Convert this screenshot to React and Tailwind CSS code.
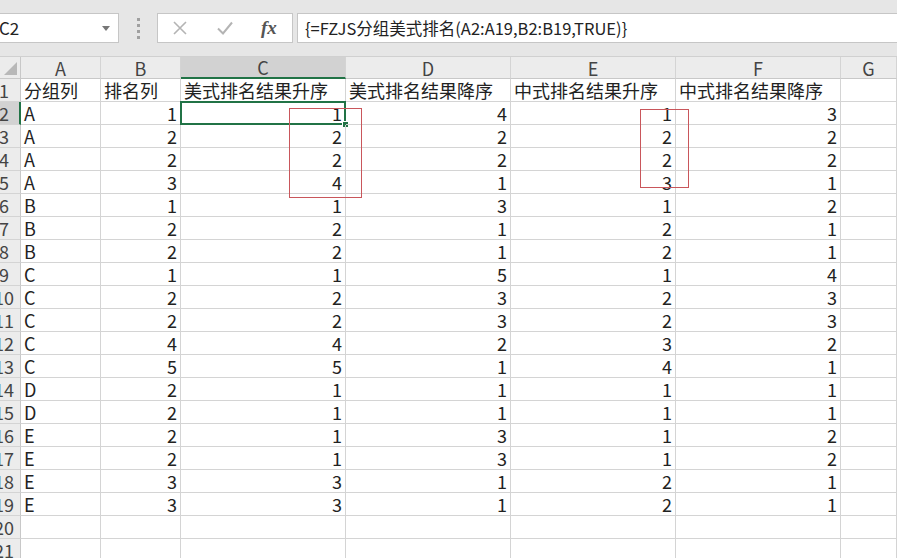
import { useState } from 'react';

const headers = ['分组列', '排名列', '美式排名结果升序', '美式排名结果降序', '中式排名结果升序', '中式排名结果降序'];

const rows = [
  ['A', 1, 1, 4, 1, 3],
  ['A', 2, 2, 2, 2, 2],
  ['A', 2, 2, 2, 2, 2],
  ['A', 3, 4, 1, 3, 1],
  ['B', 1, 1, 3, 1, 2],
  ['B', 2, 2, 1, 2, 1],
  ['B', 2, 2, 1, 2, 1],
  ['C', 1, 1, 5, 1, 4],
  ['C', 2, 2, 3, 2, 3],
  ['C', 2, 2, 3, 2, 3],
  ['C', 4, 4, 2, 3, 2],
  ['C', 5, 5, 1, 4, 1],
  ['D', 2, 1, 1, 1, 1],
  ['D', 2, 1, 1, 1, 1],
  ['E', 2, 1, 3, 1, 2],
  ['E', 2, 1, 3, 1, 2],
  ['E', 3, 3, 1, 2, 1],
  ['E', 3, 3, 1, 2, 1],
];

const cols = ['A', 'B', 'C', 'D', 'E', 'F', 'G'];
const gridCols = 'grid grid-cols-[21px_80px_80px_165px_165px_165px_165px_1fr]';

// Numero de fila, recortado por la izquierda como en la captura
function RowHead({ n, selected }) {
  return (
    <div
      className={
        'h-[23px] overflow-hidden flex items-center border-b border-[#d4d4d4] ' +
        (selected ? 'bg-[#d2d2d2] border-r-2 border-r-[#217346]' : 'bg-[#ececec] border-r border-r-[#c8c8c8]')
      }
    >
      <div className="w-[30px] shrink-0 ml-[-11px] text-center leading-none text-[#444]">{n}</div>
    </div>
  );
}

function Cell({ children, left, selected }) {
  return (
    <div
      className={
        'relative h-[23px] flex items-center border-r border-b border-[#d4d4d4] px-[3px] leading-none whitespace-nowrap text-[#222] ' +
        (left ? 'justify-start' : 'justify-end')
      }
    >
      {children}
      {selected && (
        <div className="absolute left-[-1px] top-[-1px] right-[-1px] bottom-[-1px] border-2 border-[#217346]">
          <div className="absolute right-[-5px] bottom-[-5px] w-[7px] h-[7px] bg-[#217346] border border-white" />
        </div>
      )}
    </div>
  );
}

export default function App() {
  const [formula] = useState('{=FZJS分组美式排名(A2:A19,B2:B19,TRUE)}');

  return (
    <div
      className="w-[897px] h-[558px] overflow-hidden bg-white"
      style={{ fontFamily: '"Noto Sans CJK SC", "Liberation Sans", sans-serif' }}
    >
      {/* Barra de formulas */}
      <div className="h-[57px] bg-[#e6e6e6] border-b border-[#d0d0d0] flex items-start pt-[13px]">
        <div className="w-[119px] h-[30px] bg-white border border-l-0 border-[#c6c6c6] flex items-center justify-between pr-[8px]">
          <span className="text-[17px] text-[#222] ml-[-1px]">C2</span>
          <svg width="8" height="5" viewBox="0 0 8 5"><path d="M0 0h8L4 5z" fill="#777" /></svg>
        </div>
        <div className="w-[38px] h-[30px] flex flex-col items-center justify-center gap-[3px]">
          <span className="w-[3px] h-[3px] bg-[#a0a0a0]" />
          <span className="w-[3px] h-[3px] bg-[#a0a0a0]" />
          <span className="w-[3px] h-[3px] bg-[#a0a0a0]" />
          <span className="w-[3px] h-[3px] bg-[#a0a0a0]" />
        </div>
        <div className="w-[136px] h-[30px] bg-white border border-[#c6c6c6] flex items-center">
          <svg className="ml-[14px]" width="16" height="16" viewBox="0 0 16 16">
            <path d="M2 2L14 14M14 2L2 14" stroke="#b4b4b4" strokeWidth="1.6" />
          </svg>
          <svg className="ml-[28px]" width="18" height="16" viewBox="0 0 18 16">
            <path d="M2 8.5L7 13.5L16 2.5" stroke="#b4b4b4" strokeWidth="2" fill="none" />
          </svg>
          <span
            className="ml-[27px] text-[19px] italic font-bold text-[#555]"
            style={{ fontFamily: '"Liberation Serif", serif' }}
          >
            fx
          </span>
        </div>
        <div className="ml-[4px] flex-1 h-[30px] bg-white border border-r-0 border-[#c6c6c6] flex items-center pl-[7px]">
          <span className="text-[16.5px] text-[#222] whitespace-nowrap">{formula}</span>
        </div>
      </div>

      {/* Hoja */}
      <div className="relative text-[18px]">
        {/* Encabezados de columna */}
        <div className={gridCols + ' h-[22px]'}>
          <div className="bg-[#ececec] border-r border-b border-[#c8c8c8] flex items-end justify-end p-[3px]">
            <svg width="13" height="13" viewBox="0 0 13 13"><path d="M13 0V13H0z" fill="#b8b8b8" /></svg>
          </div>
          {cols.map((c) => (
            <div
              key={c}
              className={
                'flex items-center justify-center leading-none text-[#444] border-r border-[#d4d4d4] ' +
                (c === 'C' ? 'bg-[#d2d2d2] border-b-2 border-b-[#217346]' : 'bg-[#ececec] border-b border-b-[#c8c8c8]')
              }
            >
              {c}
            </div>
          ))}
        </div>

        {/* Fila 1 */}
        <div className={gridCols}>
          <RowHead n={1} />
          {headers.map((h) => (
            <Cell key={h} left>{h}</Cell>
          ))}
          <Cell />
        </div>

        {rows.map((r, i) => (
          <div key={i} className={gridCols}>
            <RowHead n={i + 2} selected={i === 0} />
            <Cell left>{r[0]}</Cell>
            <Cell>{r[1]}</Cell>
            <Cell selected={i === 0}>{r[2]}</Cell>
            <Cell>{r[3]}</Cell>
            <Cell>{r[4]}</Cell>
            <Cell>{r[5]}</Cell>
            <Cell />
          </div>
        ))}

        {[20, 21].map((n) => (
          <div key={n} className={gridCols}>
            <RowHead n={n} />
            {cols.map((c) => (
              <Cell key={c} />
            ))}
          </div>
        ))}

        {/* Marcas rojas */}
        <div className="absolute left-[289px] top-[51px] w-[73px] h-[90px] border border-[#c9565b]" />
        <div className="absolute left-[640px] top-[52px] w-[49px] h-[79px] border border-[#c9565b]" />
      </div>
    </div>
  );
}
